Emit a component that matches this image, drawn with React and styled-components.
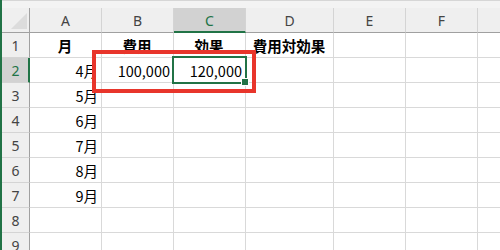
import React from "react";
import styled, { createGlobalStyle } from "styled-components";

const GlobalStyle = createGlobalStyle`
  html, body {
    margin: 0;
    padding: 0;
    background: #ffffff;
  }
`;

// G is only partly on screen, its letter falls past the right edge
const COLUMNS = [
  { key: "A", width: 72, label: "A" },
  { key: "B", width: 72, label: "B" },
  { key: "C", width: 72, label: "C" },
  { key: "D", width: 88, label: "D" },
  { key: "E", width: 72, label: "E" },
  { key: "F", width: 72, label: "F" },
  { key: "G", width: 72, label: "" },
];

const ROWS = [
  { A: "月", B: "費用", C: "効果", D: "費用対効果", head: true },
  { A: "4月", B: "100,000", C: "120,000" },
  { A: "5月" },
  { A: "6月" },
  { A: "7月" },
  { A: "8月" },
  { A: "9月" },
  {},
  {},
];

const ACTIVE_COL = "C";
const ACTIVE_ROW = 2;

const Window = styled.div`
  width: 500px;
  height: 250px;
  overflow: hidden;
  box-sizing: border-box;
  border-left: 2px solid #217346;
  background: #ffffff;
`;

const TopStrip = styled.div`
  height: 8px;
  box-sizing: border-box;
  border-top: 1px solid #d6d6d6;
  background: #f3f3f3;
`;

const Sheet = styled.div`
  position: relative;
  display: grid;
  grid-template-columns: 28px ${COLUMNS.map((c) => `${c.width}px`).join(" ")};
  grid-auto-rows: 25px;
`;

const Corner = styled.div`
  position: relative;
  box-sizing: border-box;
  background: #efefef;
  border-right: 1px solid #a0a0a0;
  border-bottom: 1px solid #a0a0a0;

  &::after {
    content: "";
    position: absolute;
    right: 2px;
    bottom: 3px;
    width: 0;
    height: 0;
    border-left: 16px solid transparent;
    border-bottom: 16px solid #dcdcdc;
  }
`;

const ColHead = styled.div`
  box-sizing: border-box;
  display: flex;
  align-items: center;
  justify-content: center;
  background: ${(p) => (p.$active ? "#d2d2d2" : "#efefef")};
  border-right: 1px solid #d4d4d4;
  border-bottom: ${(p) => (p.$active ? "2px solid #217346" : "1px solid #a0a0a0")};
  color: ${(p) => (p.$active ? "#217346" : "#444444")};
  font-family: "Noto Sans", "Open Sans", sans-serif;
  font-size: 14px;
  padding-top: ${(p) => (p.$active ? "1px" : "0")};
`;

const RowHead = styled.div`
  box-sizing: border-box;
  display: flex;
  align-items: center;
  justify-content: center;
  background: ${(p) => (p.$active ? "#d2d2d2" : "#efefef")};
  border-right: ${(p) => (p.$active ? "2px solid #217346" : "1px solid #a0a0a0")};
  border-bottom: 1px solid #d4d4d4;
  color: ${(p) => (p.$active ? "#217346" : "#444444")};
  font-family: "Noto Sans", "Open Sans", sans-serif;
  font-size: 14px;
  padding-left: ${(p) => (p.$active ? "1px" : "0")};
`;

const Cell = styled.div`
  position: relative;
  box-sizing: border-box;
  display: flex;
  align-items: center;
  justify-content: ${(p) => (p.$head ? "center" : "flex-end")};
  padding: 0 3px 0 2px;
  border-right: 1px solid #d9d9d9;
  border-bottom: 1px solid #d9d9d9;
  color: #000000;
  font-family: "Noto Sans CJK JP", "Noto Sans", sans-serif;
  font-size: 14.5px;
  font-weight: ${(p) => (p.$head ? 700 : 400)};
  white-space: nowrap;
`;

// green frame around the active cell, drawn over the gridlines
const Selection = styled.div`
  position: absolute;
  left: -2px;
  top: -2px;
  width: 75px;
  height: 28px;
  box-sizing: border-box;
  border: 2px solid #217346;
  pointer-events: none;
  z-index: 2;
`;

const FillHandle = styled.div`
  position: absolute;
  right: -4px;
  bottom: -4px;
  width: 6px;
  height: 6px;
  background: #217346;
  border: 1px solid #ffffff;
`;

// red marker drawn around B2:C2
const Callout = styled.div`
  position: absolute;
  left: 90px;
  top: 42px;
  width: 164px;
  height: 43px;
  box-sizing: border-box;
  border: 4px solid #e8352b;
  pointer-events: none;
  z-index: 3;
`;

export default function App() {
  return (
    <>
      <GlobalStyle />
      <Window>
        <TopStrip />
        <Sheet>
          <Corner />
          {COLUMNS.map((c) => (
            <ColHead key={c.key} $active={c.key === ACTIVE_COL}>
              {c.label}
            </ColHead>
          ))}
          {ROWS.map((row, i) => {
            const n = i + 1;
            return (
              <React.Fragment key={n}>
                <RowHead $active={n === ACTIVE_ROW}>{n}</RowHead>
                {COLUMNS.map((c) => {
                  const active = n === ACTIVE_ROW && c.key === ACTIVE_COL;
                  return (
                    <Cell key={c.key} $head={row.head}>
                      {row[c.key]}
                      {active && (
                        <Selection>
                          <FillHandle />
                        </Selection>
                      )}
                    </Cell>
                  );
                })}
              </React.Fragment>
            );
          })}
          <Callout />
        </Sheet>
      </Window>
    </>
  );
}
